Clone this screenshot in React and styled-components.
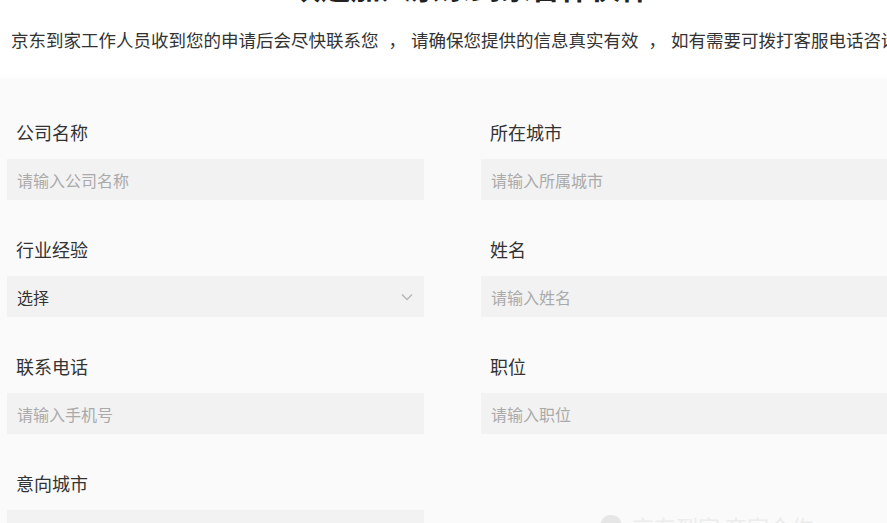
import React from "react";
import styled, { createGlobalStyle } from "styled-components";

const GlobalStyle = createGlobalStyle`
  body {
    margin: 0;
    background: #fafafa;
    overflow: hidden;
    font-family: "Noto Sans CJK SC", "Noto Sans", sans-serif;
  }
`;

const Page = styled.div`
  position: relative;
  width: 887px;
  height: 523px;
  overflow: hidden;
`;

const Header = styled.div`
  background: #fff;
  height: 78px;
  overflow: hidden;
`;

const Title = styled.h1`
  margin: -29px 0 0;
  padding-left: 54px;
  font-size: 30px;
  line-height: 30px;
  font-weight: 700;
  color: #222;
  text-align: center;
  white-space: nowrap;
`;

const Subtitle = styled.p`
  margin: 27px 0 0;
  padding-left: 11px;
  font-size: 17.5px;
  line-height: 24px;
  color: #333;
  white-space: nowrap;
`;

const Comma = styled.span`
  margin: 0 5px 0 10px;
`;

const Form = styled.div`
  display: grid;
  grid-template-columns: 417px 417px;
  column-gap: 57px;
  row-gap: 37px;
  padding: 42px 0 0 7px;
`;

const Field = styled.div`
  display: flex;
  flex-direction: column;
`;

const Label = styled.label`
  padding-left: 9px;
  margin-bottom: 15px;
  font-size: 18px;
  line-height: 24px;
  color: #333;
`;

const Input = styled.div`
  display: flex;
  align-items: center;
  justify-content: space-between;
  height: 41px;
  padding: 0 11px 0 10px;
  background: #f2f2f2;
  font-size: 16px;
  line-height: 20px;
  color: ${(p) => (p.$filled ? "#333" : "#aaa")};
`;

const Chevron = styled.svg`
  width: 12px;
  height: 8px;
  stroke: #b5b5b5;
  fill: none;
  stroke-width: 1.3;
`;

const Watermark = styled.div`
  position: absolute;
  left: 600px;
  top: 510px;
  display: flex;
  align-items: center;
  gap: 10px;
  font-size: 22px;
  color: #ececec;
  white-space: nowrap;
`;

const WmDot = styled.span`
  width: 22px;
  height: 22px;
  border-radius: 50%;
  background: #e6e6e6;
`;

const fields = [
  { label: "公司名称", value: "请输入公司名称" },
  { label: "所在城市", value: "请输入所属城市" },
  { label: "行业经验", value: "选择", select: true },
  { label: "姓名", value: "请输入姓名" },
  { label: "联系电话", value: "请输入手机号" },
  { label: "职位", value: "请输入职位" },
  { label: "意向城市", value: "请选择意向城市" },
];

export default function App() {
  return (
    <Page>
      <GlobalStyle />
      <Header>
        <Title>欢迎加入京东到家合作伙伴</Title>
        <Subtitle>
          京东到家工作人员收到您的申请后会尽快联系您<Comma>，</Comma>请确保您提供的信息真实有效<Comma>，</Comma>如有需要可拨打客服电话咨询
        </Subtitle>
      </Header>
      <Form>
        {fields.map((f) => (
          <Field key={f.label}>
            <Label>{f.label}</Label>
            <Input $filled={f.select}>
              {f.value}
              {f.select && (
                <Chevron viewBox="0 0 12 8">
                  <path d="M1 1.5 L6 6.5 L11 1.5" />
                </Chevron>
              )}
            </Input>
          </Field>
        ))}
      </Form>
      <Watermark>
        <WmDot />
        京东到家 商家合作
      </Watermark>
    </Page>
  );
}
